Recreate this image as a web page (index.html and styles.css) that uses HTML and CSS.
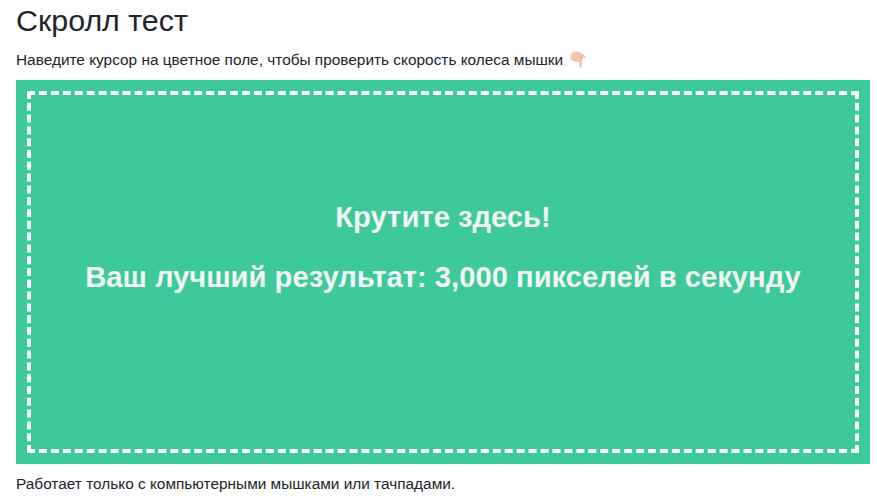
FILE: index.html
```html
<!DOCTYPE html>
<html lang="ru">
  <head>
    <meta charset="utf-8">
    <title>Скролл тест</title>
    <link rel="stylesheet" href="styles.css">
  </head>
  <body>
    <main>
      <h1>Скролл тест</h1>
      <p class="hint">Наведите курсор на цветное поле, чтобы проверить скорость колеса мышки
        <svg class="hand" viewBox="0 0 16 18" width="16" height="18" role="img" aria-label="рука">
          <path fill="#f6c3ae" d="M.5 6C.5 2.5 3 .5 6 .5L9 1C11 1.4 13 3.4 15.5 5.4 16.2 6.2 15.4 7.1 14.2 6.8L12.6 6.4 12.2 8.6 11.8 15.6C11.6 17.3 9.6 17.3 9.4 15.6L9 11 5.5 10.6C2.5 10.3.5 9 .5 6Z"/>
          <path fill="#e9a58e" d="M9 5.2 12.6 6.4 12.2 8.6 10.4 7.2Z"/>
        </svg>
      </p>
      <section class="scroll_area">
        <div class="scroll_inner">
          <h2>Крутите здесь!</h2>
          <h2>Ваш лучший результат: 3,000 пикселей в секунду</h2>
        </div>
      </section>
      <p class="note">Работает только с компьютерными мышками или тачпадами.</p>
    </main>
  </body>
</html>
```

FILE: styles.css
```css
html {
  overflow: hidden;
}

body {
  margin: 0;
  padding: 0 7px 0 16px;
  font-family: "Liberation Sans", Arial, sans-serif;
  font-size: 15.4px;
  line-height: 20px;
  color: #212529;
  background-color: #fff;
}

h1 {
  margin: 0;
  font-size: 30.4px;
  font-weight: 400;
  line-height: 40px;
}

.hint {
  display: flex;
  align-items: center;
  gap: 7px;
  margin: 10px 0 0;
}

.hand {
  flex: none;
}

.scroll_area {
  margin-top: 10px;
  padding: 11px;
  height: 384px;
  box-sizing: border-box;
  background-color: #3ec99d;
}

.scroll_inner {
  height: 100%;
  box-sizing: border-box;
  padding-top: 102px;
  border: 4px dashed #fff;
  color: #f1f5f3;
  text-align: center;
}

h2 {
  margin: 0 0 20px;
  font-size: 29.2px;
  font-weight: 700;
  line-height: 40px;
}

.note {
  margin: 10px 0 0;
}
```
